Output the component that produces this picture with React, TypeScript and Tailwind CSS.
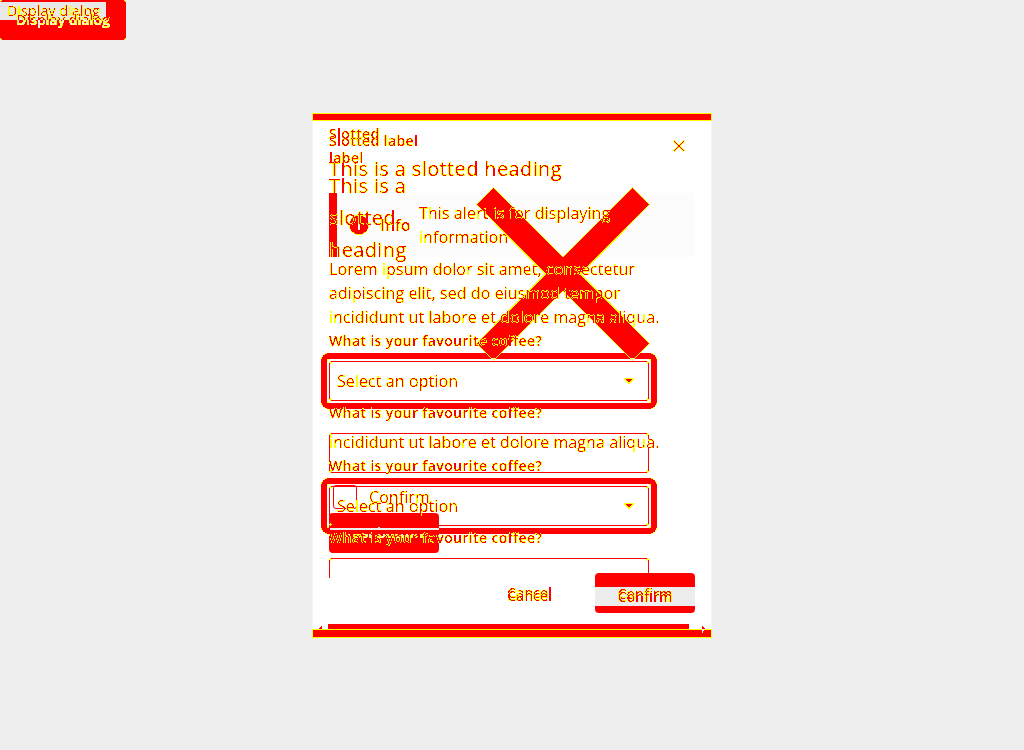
import React from "react";

const ink = "[filter:url(#edge)] whitespace-nowrap text-[#ff0000]";

/* Paints partially covered pixels yellow and keeps solid pixels in their own colour. */
function EdgeFilter() {
  return (
    <svg width="0" height="0" className="absolute">
      <filter id="edge" x="-5%" y="-5%" width="110%" height="110%" colorInterpolationFilters="sRGB">
        <feComponentTransfer in="SourceAlpha" result="any">
          <feFuncA type="discrete" tableValues="0 1 1 1 1 1 1 1 1 1 1 1 1 1 1 1 1 1 1 1" />
        </feComponentTransfer>
        <feFlood floodColor="#ffff00" />
        <feComposite in2="any" operator="in" result="edge" />
        <feComponentTransfer in="SourceGraphic" result="core">
          <feFuncA type="discrete" tableValues="0 0 0 0 0 0 0 0 0 0 0 0 0 0 1 1 1 1 1 1" />
        </feComponentTransfer>
        <feMerge>
          <feMergeNode in="edge" />
          <feMergeNode in="core" />
        </feMerge>
      </filter>
    </svg>
  );
}

function Label({ children }: { children: React.ReactNode }) {
  return <div className={`${ink} h-6 text-[14px] leading-6 font-semibold tracking-[0.38px]`}>{children}</div>;
}

function Select() {
  return (
    <div className="-mx-2 h-14 w-[336px] rounded-[8px] border-6 border-[#ff0000] p-[2px] [filter:url(#edge)]">
      <div className="flex h-10 items-center justify-between rounded-[3px] border border-[#ff0000] pr-[14px] pl-[7px]">
        <span className={`${ink} text-[16px] tracking-[0.08px]`}>Select an option</span>
        <svg width="10" height="6" viewBox="0 0 10 6" shapeRendering="crispEdges">
          <path d="M0 0h10v2h-1v1h-1v1h-1v1h-1v1h-2v-1h-1v-1h-1v-1h-1v-1h-1z" fill="#ffff00" />
          <path d="M2 1h6v1h-1v1h-1v1h-2v-1h-1v-1h-1z" fill="#ff0000" />
        </svg>
      </div>
    </div>
  );
}

function Field() {
  return <div className="h-10 w-80 shrink-0 rounded-[3px] border border-[#ff0000] [filter:url(#edge)]" />;
}

function Alert() {
  return (
    <div className="flex h-16 w-[366px] items-center border-l-8 border-[#ff0000] pl-3">
      <svg width="20" height="20" viewBox="0 0 20 20" className="[filter:url(#edge)]">
        <circle cx="10" cy="10" r="9.7" fill="#ff0000" />
        <path d="M10 5v2M10 9v6" stroke="#fcfcfc" strokeWidth="2" />
      </svg>
      <span className={`${ink} ml-[11px] w-[39px] text-[16px] font-semibold`}>Info</span>
      <p className={`${ink} text-[16px] leading-6 tracking-[0.08px]`}>
        This alert is for displaying
        <br />
        information
      </p>
    </div>
  );
}

function CurrentLayer() {
  return (
    <div className="col-start-1 row-start-1 flex flex-col pt-4 pl-[17px]">
      <Label>Slotted label</Label>
      <div className={`${ink} h-8 text-[20px] leading-8 font-medium tracking-[0.37px]`}>This is a slotted heading</div>
      <div className="h-2" />
      <Alert />
      <p className={`${ink} h-[72px] text-[16px] leading-6 tracking-[0.08px]`}>
        Lorem ipsum dolor sit amet, consectetur
        <br />
        adipiscing elit, sed do eiusmod tempor
        <br />
        incididunt ut labore et dolore magna aliqua.
      </p>
      <Label>What is your favourite coffee?</Label>
      <Select />
      <div className="-mt-2">
        <Label>What is your favourite coffee?</Label>
      </div>
      <div className="h-2" />
      <Field />
      <div className="mt-3 flex h-7 pl-1">
        <div className="size-6 rounded-[3px] border border-[#ff0000]" />
        <span className={`${ink} ml-3 text-[16px] leading-6 tracking-[0.08px]`}>Confirm</span>
      </div>
      <div className="flex h-10 w-[110px] justify-center rounded-[4px] bg-[#ff0000] text-[14px] leading-10 font-semibold">
        <span className="[filter:url(#edge)] text-[#ededed]">Test button</span>
      </div>
    </div>
  );
}

function PreviousLayer() {
  return (
    <div className="col-start-1 row-start-1 flex h-[465px] flex-col overflow-hidden pt-[9px] pl-[17px]">
      <Label>Slotted</Label>
      <Label>label</Label>
      <div className={`${ink} h-24 shrink-0 text-[20px] leading-8 font-medium tracking-[0.37px]`}>
        This is a
        <br />
        slotted
        <br />
        heading
      </div>
      <div className="h-[164px] shrink-0" />
      <p className={`${ink} text-[16px] leading-6 tracking-[0.08px]`}>incididunt ut labore et dolore magna aliqua.</p>
      <Label>What is your favourite coffee?</Label>
      <Select />
      <div className="-mt-2">
        <Label>What is your favourite coffee?</Label>
      </div>
      <div className="h-2 shrink-0" />
      <Field />
    </div>
  );
}

function Crosses() {
  return (
    <svg className="col-start-1 row-start-1" width="400" height="525" viewBox="312 113 400 525">
      <path
        d="M493.5 187.5L563 257L632.5 187.5L649.5 204.5L580.5 274L649.5 343.5L632.5 360.5L563 291L493.5 360.5L476.5 343.5L545.5 274L476.5 204.5Z"
        fill="#ff0000"
        stroke="#ffff00"
        strokeWidth="1.2"
        shapeRendering="crispEdges"
      />
      <path d="M674 141l10 10M684 141l-10 10" stroke="#ff0000" strokeWidth="1.2" className="[filter:url(#edge)]" />
    </svg>
  );
}

/* Where the cross tips meet the focus ring, and where the ring meets the button. */
function Intersections() {
  return (
    <svg
      className="relative col-start-1 row-start-1"
      width="400"
      height="525"
      viewBox="312 113 400 525"
      shapeRendering="crispEdges"
    >
      <path d="M491 357.5h5l-2.5 2.5zM630 357.5h5l-2.5 2.5z" fill="#ededed" />
      <path
        d="M486 353L493.5 360.5L501 353M625 353L632.5 360.5L640 353"
        fill="none"
        stroke="#ffff00"
        strokeWidth="1.2"
      />
      <path d="M330 528h109v2h-109z" fill="#ededed" />
    </svg>
  );
}

function Footer() {
  return (
    <div className="col-start-1 row-start-1 flex h-[40px] w-[383px] items-start justify-end self-start mt-[460px] text-[14px] font-semibold">
      <div className="mr-[43px] grid leading-10">
        <span className={`${ink} col-start-1 row-start-1`}>Cancel</span>
        <span className={`${ink} relative top-[3px] col-start-1 row-start-1`}>Cancel</span>
      </div>
      <div className="flex h-10 w-[100px] flex-col overflow-hidden rounded-[4px] bg-[#ff0000] pt-[14px]">
        <div className="grid h-[19px] justify-center bg-[#ededed] leading-[14px]">
          <span className={`${ink} col-start-1 row-start-1`}>Confirm</span>
          <span className={`${ink} relative top-[3px] col-start-1 row-start-1`}>Confirm</span>
        </div>
      </div>
    </div>
  );
}

function Scrollbar() {
  return (
    <svg className="col-start-1 row-start-1 mt-[511px]" width="400" height="14" viewBox="312 624 400 14" shapeRendering="crispEdges">
      <path d="M328 624h361v5h-361z" fill="#ff0000" />
      <path d="M312 629h400v9h-400z" fill="#ffff00" />
      <path d="M313 630h398v7h-398z" fill="#ff0000" />
      <path d="M321 626h1v3h-3v-1h1v-1h1z" fill="#ff0000" />
      <path d="M702 626h1v1h1v1h1v1h-3z" fill="#ff0000" />
      <path d="M702 629h3v1h-1v1h-1v2h-1z" fill="#ededed" />
    </svg>
  );
}

export default function App() {
  return (
    <main className="grid h-[750px] w-[1024px] overflow-hidden bg-[#eeeeee] font-['Open_Sans',sans-serif]">
      <EdgeFilter />
      <div className="col-start-1 row-start-1 grid h-10 w-[126px] rounded-[4px] bg-[#ff0000] [filter:url(#edge)]">
        <div className="col-start-1 row-start-1 mt-[2px] h-[18px] w-[106px] bg-[#e8e8e8]" />
        <div className={`${ink} col-start-1 row-start-1 pl-[7px] text-[14px] leading-[22px] tracking-[0.2px]`}>
          Display dialog
        </div>
        <div className="col-start-1 row-start-1 [filter:url(#edge)]">
          <div className="h-10 bg-[linear-gradient(#ff0000_50%,#ededed_50%)] bg-clip-text pl-4 text-[14px] leading-10 font-semibold whitespace-nowrap text-transparent">
            Display dialog
          </div>
        </div>
      </div>
      <section className="col-start-1 row-start-1 mt-[113px] grid h-[525px] w-[400px] justify-self-center overflow-hidden bg-white shadow-[inset_1px_0_#f4f4f4,inset_-1px_0_#f4f4f4] [grid-template:525px/400px]">
        <div className="col-start-1 row-start-1 h-2 border border-[#ffff00] bg-[#ff0000]" />
        <div className="col-start-1 row-start-1 mt-20 ml-[17px] h-16 w-[366px] bg-[#fcfcfc]" />
        <Crosses />
        <CurrentLayer />
        <PreviousLayer />
        <Intersections />
        <Footer />
        <Scrollbar />
      </section>
    </main>
  );
}
